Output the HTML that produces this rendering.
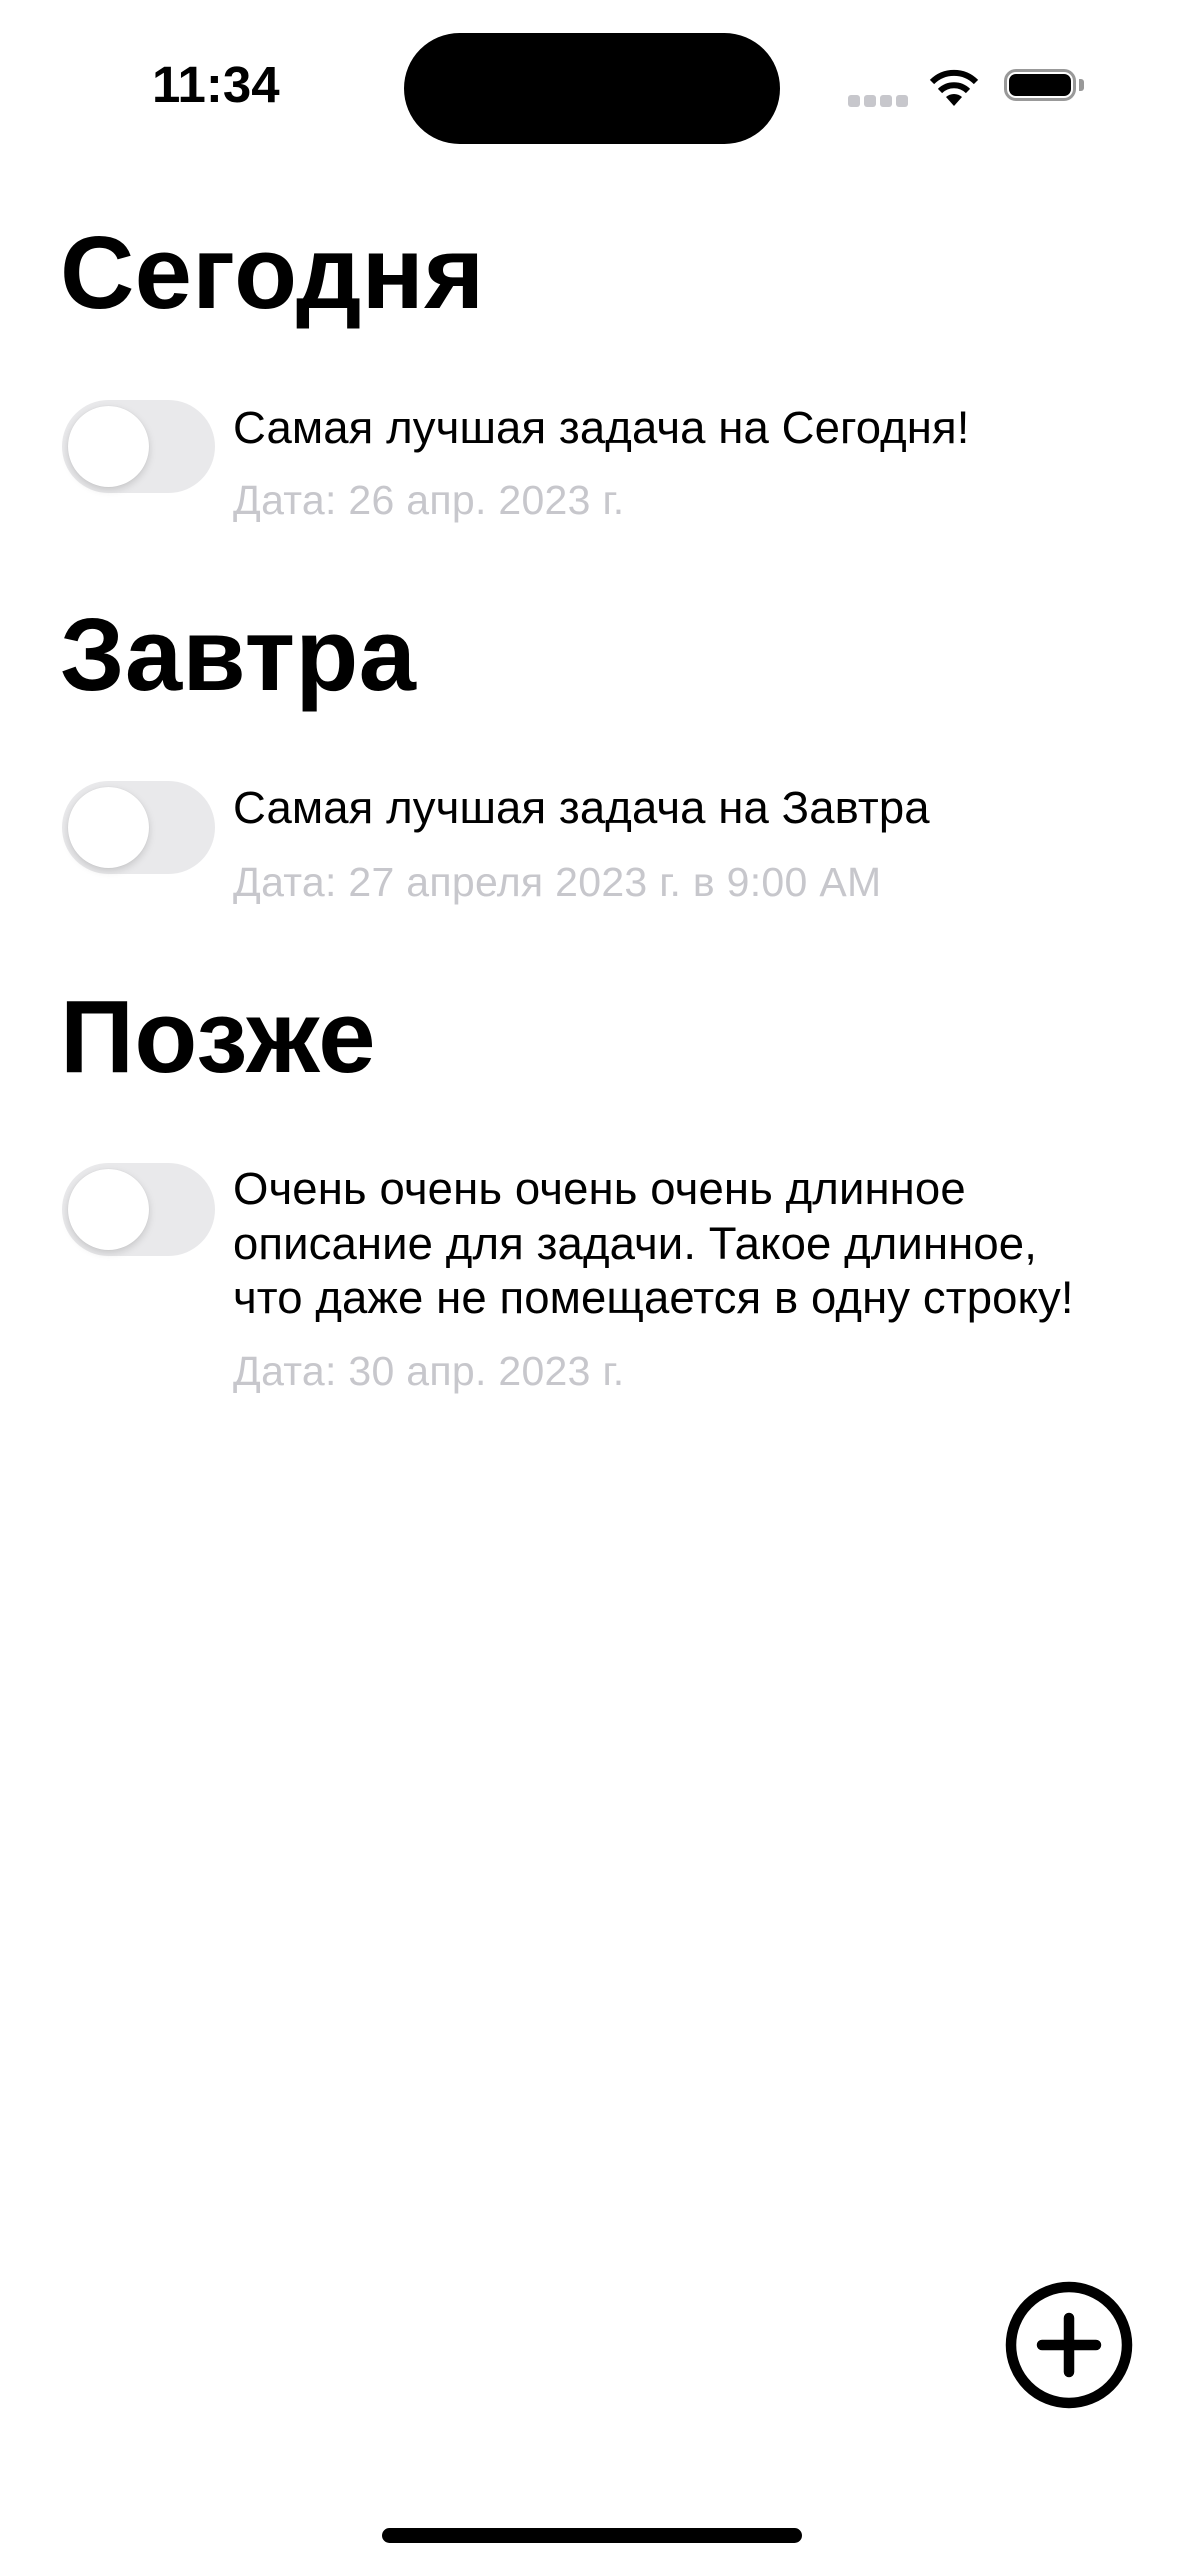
<!DOCTYPE html>
<html><head><meta charset="utf-8"><style>
html,body{margin:0;padding:0;background:#fff;}
body{width:1179px;height:2556px;position:relative;overflow:hidden;font-family:"Liberation Sans",sans-serif;color:#000;}
.a{position:absolute;white-space:nowrap;}
.h{font-size:103px;font-weight:bold;left:60px;line-height:1;letter-spacing:0.3px;}
.t{font-size:45.5px;left:233px;line-height:54.5px;letter-spacing:0.1px;}
.d{font-size:41px;left:233px;color:#c7c7cc;line-height:1;letter-spacing:0.3px;}
.tg{position:absolute;left:62px;width:153px;height:93px;border-radius:47px;background:#e9e9eb;}
.tg::after{content:"";position:absolute;left:6px;top:6px;width:81px;height:81px;border-radius:50%;background:#fff;box-shadow:0 3px 8px rgba(0,0,0,.15),0 0 1px rgba(0,0,0,.1);}
</style></head><body>
<div class="a" style="left:152px;top:59px;font-size:51px;font-weight:bold;line-height:1;">11:34</div>
<div class="a" style="left:404px;top:33px;width:376px;height:111px;border-radius:56px;background:#000;"></div>
<div class="a" style="left:848px;top:95px;width:12px;height:12px;border-radius:3px;background:#c7c7cc;"></div>
<div class="a" style="left:864px;top:95px;width:12px;height:12px;border-radius:3px;background:#c7c7cc;"></div>
<div class="a" style="left:880px;top:95px;width:12px;height:12px;border-radius:3px;background:#c7c7cc;"></div>
<div class="a" style="left:896px;top:95px;width:12px;height:12px;border-radius:3px;background:#c7c7cc;"></div>
<svg class="a" style="left:928px;top:68px" width="52" height="40" viewBox="0 0 52 40"><path d="M26 38 L18 29 A12 12 0 0 1 34 29 Z" fill="#000"/><path d="M12 23 A20 20 0 0 1 40 23" stroke="#000" stroke-width="6" fill="none"/><path d="M4 14 A31 31 0 0 1 48 14" stroke="#000" stroke-width="6" fill="none"/></svg>
<div class="a" style="left:1004px;top:69px;width:72px;height:32px;border:3px solid #999;border-radius:12px;box-sizing:border-box;"></div>
<div class="a" style="left:1009px;top:74px;width:62px;height:22px;background:#000;border-radius:7px;"></div>
<div class="a" style="left:1079px;top:79px;width:5px;height:12px;background:#999;border-radius:0 3px 3px 0;"></div>

<div class="a h" style="top:221px;">Сегодня</div>
<div class="tg" style="top:400px;"></div>
<div class="a t" style="top:401px;">Самая лучшая задача на Сегодня!</div>
<div class="a d" style="top:480px;">Дата: 26 апр. 2023 г.</div>

<div class="a h" style="top:603px;">Завтра</div>
<div class="tg" style="top:781px;"></div>
<div class="a t" style="top:781px;">Самая лучшая задача на Завтра</div>
<div class="a d" style="top:862px;">Дата: 27 апреля 2023 г. в 9:00 AM</div>

<div class="a h" style="top:985px;">Позже</div>
<div class="tg" style="top:1163px;"></div>
<div class="a t" style="top:1162px;">Очень очень очень очень длинное<br>описание для задачи. Такое длинное,<br>что даже не помещается в одну строку!</div>
<div class="a d" style="top:1351px;">Дата: 30 апр. 2023 г.</div>

<svg class="a" style="left:1004px;top:2280px" width="130" height="130" viewBox="0 0 130 130"><circle cx="65" cy="65" r="58" stroke="#000" stroke-width="10.5" fill="none"/><path d="M65 38 V92 M38 65 H92" stroke="#000" stroke-width="10.5" stroke-linecap="round"/></svg>
<div class="a" style="left:382px;top:2528px;width:420px;height:15px;border-radius:8px;background:#000;"></div>
</body></html>
